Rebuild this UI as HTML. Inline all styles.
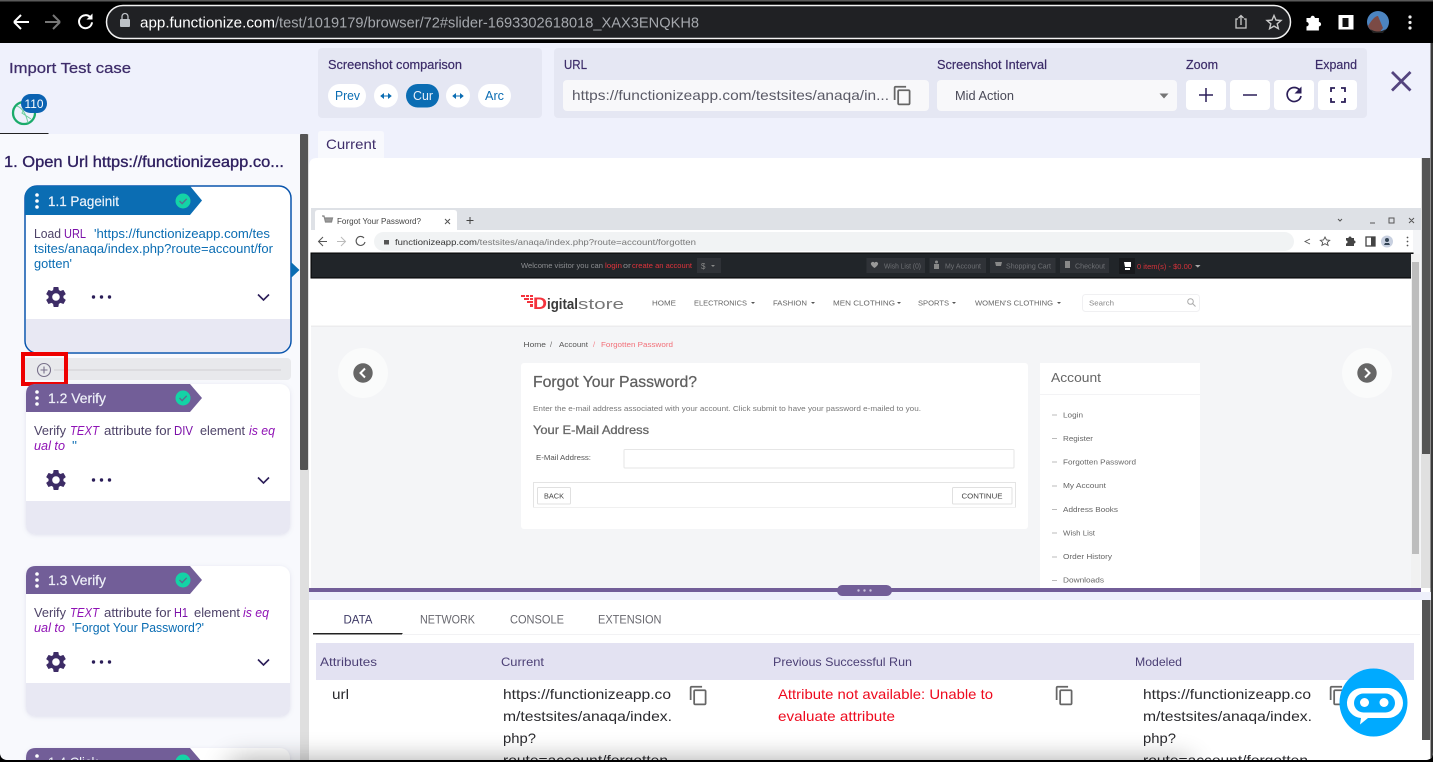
<!DOCTYPE html>
<html><head><meta charset="utf-8"><title>Functionize</title>
<style>
html,body{margin:0;padding:0;width:1433px;height:762px;overflow:hidden;background:#000}
svg{display:block;font-family:"Liberation Sans",sans-serif}
.s text{filter:blur(.25px)}
.m{stroke:currentColor;stroke-width:.2}
</style></head><body>
<svg width="1433" height="762" viewBox="0 0 1433 762" xmlns="http://www.w3.org/2000/svg">
<defs>
<path id="gear" d="M19.14 12.94c.04-.3.06-.61.06-.94 0-.32-.02-.64-.07-.94l2.03-1.58c.18-.14.23-.41.12-.61l-1.92-3.32c-.12-.22-.37-.29-.59-.22l-2.39.96c-.5-.38-1.03-.7-1.62-.94l-.36-2.54c-.04-.24-.24-.41-.48-.41h-3.84c-.24 0-.43.17-.47.41l-.36 2.54c-.59.24-1.13.57-1.62.94l-2.39-.96c-.22-.08-.47 0-.59.22L2.74 8.87c-.12.21-.08.47.12.61l2.03 1.58c-.05.3-.09.63-.09.94s.02.64.07.94l-2.03 1.58c-.18.14-.23.41-.12.61l1.92 3.32c.12.22.37.29.59.22l2.39-.96c.5.38 1.03.7 1.62.94l.36 2.54c.05.24.24.41.48.41h3.84c.24 0 .44-.17.47-.41l.36-2.54c.59-.24 1.13-.56 1.62-.94l2.39.96c.22.08.47 0 .59-.22l1.92-3.32c.12-.22.07-.47-.12-.61l-2.01-1.58zM12 15.6c-1.98 0-3.6-1.62-3.6-3.6s1.62-3.6 3.6-3.6 3.6 1.62 3.6 3.6-1.62 3.6-3.6 3.6z"/>
<path id="copy" d="M16 1H4c-1.1 0-2 .9-2 2v14h2V3h12V1zm3 4H8c-1.1 0-2 .9-2 2v14c0 1.1.9 2 2 2h11c1.1 0 2-.9 2-2V7c0-1.1-.9-2-2-2zm0 16H8V7h11v14z"/>
<g id="acts">
<use href="#gear" transform="translate(43.5,-12.5) scale(1.04)" fill="#3d2c66"/>
<circle cx="93.5" cy="0" r="1.7" fill="#2b1e58"/><circle cx="101.5" cy="0" r="1.7" fill="#2b1e58"/><circle cx="109.5" cy="0" r="1.7" fill="#2b1e58"/>
<path d="M258 -2.5l5.5 5.5 5.5-5.5" fill="none" stroke="#2b1e58" stroke-width="1.6"/>
</g>
<g id="hdrdots"><circle cx="37" cy="-6" r="1.8" fill="#fff"/><circle cx="37" cy="0" r="1.8" fill="#fff"/><circle cx="37" cy="6" r="1.8" fill="#fff"/>
<circle cx="183" cy="0" r="7.5" fill="#14d3a6"/><path d="M179.5 0l2.6 2.6 4.6-4.8" fill="none" stroke="#5b6f8e" stroke-width="1.4"/></g>
<filter id="bl" x="-20%" y="-300%" width="140%" height="700%"><feGaussianBlur stdDeviation="14"/></filter>
<filter id="sh" x="-10%" y="-10%" width="120%" height="120%"><feDropShadow dx="0" dy="1" stdDeviation="2" flood-color="#7a7aa8" flood-opacity=".2"/></filter>
<clipPath id="win"><path d="M0 43H1433V752q0 8-8 8H8q-8 0-8-8z"/></clipPath>
<clipPath id="cl"><rect x="309" y="158" width="1112" height="430"/></clipPath>
</defs>

<!-- browser chrome -->
<rect width="1433" height="762" fill="#000"/>
<rect width="1433" height="1.5" fill="#5a5a5a"/>
<path d="M14 22l7-7M14 22l7 7M14 22h15" stroke="#fff" stroke-width="2" fill="none"/>
<path d="M60 22l-7-7M60 22l-7 7M60 22H45" stroke="#777" stroke-width="2" fill="none"/>
<path d="M90.500 17.500a6.500 6.500 0 1 0 1.500 4.800" stroke="#fff" stroke-width="2" fill="none"/><path d="M92.500 13.500v6h-6z" fill="#fff"/>
<rect x="106.500" y="5.500" width="1184" height="33" rx="16.500" fill="#202124" stroke="#f2f2f2" stroke-width="1.5"/>
<rect x="120" y="19" width="10" height="8" rx="1" fill="#bdc1c6"/><path d="M122 19v-2.500a3 3 0 0 1 6 0V19" fill="none" stroke="#bdc1c6" stroke-width="1.300"/>
<text x="140" y="27.500" font-size="15" fill="#fff" textLength="135" lengthAdjust="spacingAndGlyphs">app.functionize.com</text>
<text x="275" y="27.500" font-size="15" fill="#a5a8ad" textLength="424" lengthAdjust="spacingAndGlyphs">/test/1019179/browser/72#slider-1693302618018_XAX3ENQKH8</text>
<path d="M1238 19h-2v9h10v-9h-2M1241 25v-9M1238.500 18l2.500-2.500 2.500 2.500" fill="none" stroke="#c8c8c8" stroke-width="1.300"/>
<path d="M1274 15.500l2 4.600 5 .4-3.800 3.300 1.200 4.900-4.400-2.600-4.400 2.600 1.200-4.900-3.800-3.300 5-.4z" fill="none" stroke="#c8c8c8" stroke-width="1.400"/>
<path d="M1306.500 18h4a2.200 2.200 0 0 1 4.400 0h4v4a2.200 2.200 0 0 1 0 4.400v4.100h-12.400v-4.100a2.200 2.200 0 0 0 0-4.400z" fill="#fff"/>
<rect x="1338.500" y="15" width="15" height="14.500" fill="#fff"/><rect x="1342.500" y="18" width="6" height="9" fill="#111"/>
<circle cx="1378" cy="22" r="11" fill="#4c84c0"/><path d="M1368 26q6-10 10-10l5 12-4 5q-8 0-11-7z" fill="#7b4a45"/><path d="M1370 29q8 5 16 0l-3 4h-10z" fill="#222"/>
<circle cx="1410" cy="17" r="1.600" fill="#eee"/><circle cx="1410" cy="22.500" r="1.600" fill="#eee"/><circle cx="1410" cy="28" r="1.600" fill="#eee"/>

<g clip-path="url(#win)">
<rect y="43" width="1433" height="720" fill="#eff1fc"/>

<!-- left header -->
<text x="9" y="73" font-size="15" fill="#3e2d6a" stroke="#3e2d6a" stroke-width=".25" textLength="122" lengthAdjust="spacingAndGlyphs">Import Test case</text>
<circle cx="24" cy="113" r="11" fill="none" stroke="#1bab6b" stroke-width="2.300"/>
<path d="M17 106q8 3 11 17M33 108q-9 0-11 5l9 6" fill="none" stroke="#6fcf9f" stroke-width="1"/>
<rect x="21" y="94" width="26" height="19" rx="9.500" fill="#0b63b2"/>
<text x="24.500" y="108" font-size="12" fill="#fff" textLength="19" lengthAdjust="spacingAndGlyphs">110</text>
<rect x="0" y="133" width="48.500" height="1.300" fill="#222"/>

<!-- left panel -->
<rect x="0" y="134" width="300" height="630" fill="#f8f9fd"/>
<rect x="300" y="134" width="9" height="630" fill="#dfdfdf"/>
<rect x="300" y="134" width="8" height="336" rx="1" fill="#555"/>
<text x="4" y="167" font-size="16" fill="#2f2060" stroke="#2f2060" stroke-width=".35" textLength="280" lengthAdjust="spacingAndGlyphs">1. Open Url https://functionizeapp.co...</text>

<!-- card 1 -->
<rect x="25" y="186" width="266" height="167" rx="12" fill="#fff" stroke="#0a55ad" stroke-width="1.500"/>
<path d="M26 319h264v20q0 13-12 13H38q-12 0-12-13z" fill="#e8e8f3"/>
<path d="M25 198q0-12 12-12H190l12 14.500-12 14.500H25z" fill="#0b6db3"/>
<use href="#hdrdots" y="201"/>
<text x="48" y="206" font-size="14" fill="#eef3fa" stroke="#eef3fa" stroke-width=".2" textLength="71" lengthAdjust="spacingAndGlyphs">1.1 Pageinit</text>
<text x="34" y="238" font-size="12.500" fill="#4e4368" textLength="27" lengthAdjust="spacingAndGlyphs">Load</text>
<text x="64" y="238" font-size="12.500" fill="#7b10a8" textLength="22" lengthAdjust="spacingAndGlyphs">URL</text>
<text x="94" y="238" font-size="12.500" fill="#0b6db3" textLength="176" lengthAdjust="spacingAndGlyphs">'https://functionizeapp.com/tes</text>
<text x="34" y="253" font-size="12.500" fill="#0b6db3" textLength="239" lengthAdjust="spacingAndGlyphs">tsites/anaqa/index.php?route=account/for</text>
<text x="34" y="268" font-size="12.500" fill="#0b6db3" textLength="38" lengthAdjust="spacingAndGlyphs">gotten'</text>
<use href="#acts" y="297"/>
<path d="M291 262l8.500 8-8.500 8z" fill="#0b6db3"/>

<!-- add bar -->
<rect x="22" y="358" width="269" height="22" rx="4" fill="#e8e9ec"/>
<rect x="54" y="369.500" width="227" height="1" fill="#cfcfd2"/>
<circle cx="44" cy="370" r="6.500" fill="none" stroke="#77708a" stroke-width="1.100"/>
<path d="M40.500 370h7M44 366.500v7" stroke="#77708a" stroke-width="1.100"/>
<rect x="23" y="354" width="43" height="30" fill="none" stroke="#ee0000" stroke-width="4"/>

<!-- card 2 -->
<rect x="26" y="384" width="264" height="150" rx="10" fill="#fff" filter="url(#sh)"/>
<path d="M26 501h264v23q0 10-10 10H36q-10 0-10-10z" fill="#e8e8f3"/>
<path d="M26 394q0-10 10-10H190l12 14-12 14H26z" fill="#725e98"/>
<use href="#hdrdots" y="398"/>
<text x="48" y="403" font-size="14" fill="#eef0f8" stroke="#eef0f8" stroke-width=".2" textLength="58" lengthAdjust="spacingAndGlyphs">1.2 Verify</text>
<text x="34" y="435" font-size="12.500" fill="#4e4368" textLength="32" lengthAdjust="spacingAndGlyphs">Verify</text>
<text x="70" y="435" font-size="12.500" font-style="italic" fill="#8f12b5" textLength="29" lengthAdjust="spacingAndGlyphs">TEXT</text>
<text x="104" y="435" font-size="12.500" fill="#4e4368" textLength="67" lengthAdjust="spacingAndGlyphs">attribute for</text>
<text x="174" y="435" font-size="12.500" fill="#7b10a8" textLength="19" lengthAdjust="spacingAndGlyphs">DIV</text>
<text x="200" y="435" font-size="12.500" fill="#4e4368" textLength="45" lengthAdjust="spacingAndGlyphs">element</text>
<text x="249" y="435" font-size="12.500" font-style="italic" fill="#8f12b5" textLength="26" lengthAdjust="spacingAndGlyphs">is eq</text>
<text x="34" y="450" font-size="12.500" font-style="italic" fill="#8f12b5" textLength="31" lengthAdjust="spacingAndGlyphs">ual to</text>
<text x="72" y="450" font-size="12.500" fill="#0b6db3" textLength="5" lengthAdjust="spacingAndGlyphs">''</text>
<use href="#acts" y="480"/>

<!-- card 3 -->
<rect x="26" y="566" width="264" height="150" rx="10" fill="#fff" filter="url(#sh)"/>
<path d="M26 683h264v23q0 10-10 10H36q-10 0-10-10z" fill="#e8e8f3"/>
<path d="M26 576q0-10 10-10H190l12 14-12 14H26z" fill="#725e98"/>
<use href="#hdrdots" y="580"/>
<text x="48" y="585" font-size="14" fill="#eef0f8" stroke="#eef0f8" stroke-width=".2" textLength="58" lengthAdjust="spacingAndGlyphs">1.3 Verify</text>
<text x="34" y="617" font-size="12.500" fill="#4e4368" textLength="32" lengthAdjust="spacingAndGlyphs">Verify</text>
<text x="70" y="617" font-size="12.500" font-style="italic" fill="#8f12b5" textLength="29" lengthAdjust="spacingAndGlyphs">TEXT</text>
<text x="104" y="617" font-size="12.500" fill="#4e4368" textLength="67" lengthAdjust="spacingAndGlyphs">attribute for</text>
<text x="174" y="617" font-size="12.500" fill="#7b10a8" textLength="14" lengthAdjust="spacingAndGlyphs">H1</text>
<text x="194" y="617" font-size="12.500" fill="#4e4368" textLength="46" lengthAdjust="spacingAndGlyphs">element</text>
<text x="243" y="617" font-size="12.500" font-style="italic" fill="#8f12b5" textLength="26" lengthAdjust="spacingAndGlyphs">is eq</text>
<text x="34" y="632" font-size="12.500" font-style="italic" fill="#8f12b5" textLength="31" lengthAdjust="spacingAndGlyphs">ual to</text>
<text x="72" y="632" font-size="12.500" fill="#0b6db3" textLength="132" lengthAdjust="spacingAndGlyphs">'Forgot Your Password?'</text>
<use href="#acts" y="662"/>

<!-- card 4 -->
<rect x="26" y="748" width="264" height="30" rx="10" fill="#fff" filter="url(#sh)"/>
<path d="M26 758q0-10 10-10H190l12 14-12 14H26z" fill="#725e98"/>
<use href="#hdrdots" y="762"/>
<text x="48" y="767" font-size="14" fill="#eef0f8" textLength="50" lengthAdjust="spacingAndGlyphs">1.4 Click</text>

<!-- toolbar -->
<rect x="318" y="48" width="224" height="70" rx="4" fill="#e5e7f3"/>
<text x="328" y="69" font-size="12.500" fill="#3c2c69" stroke="#3c2c69" stroke-width=".2" textLength="134" lengthAdjust="spacingAndGlyphs">Screenshot comparison</text>
<rect x="328" y="84" width="38" height="23.500" rx="11.700" fill="#fff"/>
<text x="335" y="100" font-size="12.500" fill="#0b6db3" textLength="25" lengthAdjust="spacingAndGlyphs">Prev</text>
<rect x="374" y="84" width="24" height="23.500" rx="11.700" fill="#fff"/>
<path d="M381 96h10M381 96l2.500-2v4zM391 96l-2.500-2v4z" stroke="#0b6db3" fill="#0b6db3" stroke-width="1"/>
<rect x="406" y="84" width="33" height="23.500" rx="11.700" fill="#0b6db3"/>
<text x="413" y="100" font-size="12.500" fill="#e8f0fa" textLength="20" lengthAdjust="spacingAndGlyphs">Cur</text>
<rect x="446" y="84" width="24" height="23.500" rx="11.700" fill="#fff"/>
<path d="M453 96h10M453 96l2.500-2v4zM463 96l-2.500-2v4z" stroke="#0b6db3" fill="#0b6db3" stroke-width="1"/>
<rect x="478" y="84" width="33" height="23.500" rx="11.700" fill="#fff"/>
<text x="485" y="100" font-size="12.500" fill="#0b6db3" textLength="19" lengthAdjust="spacingAndGlyphs">Arc</text>

<rect x="554" y="48" width="813" height="70" rx="4" fill="#e5e7f3"/>
<text x="564" y="69" font-size="12.500" fill="#3c2c69" stroke="#3c2c69" stroke-width=".2" textLength="23" lengthAdjust="spacingAndGlyphs">URL</text>
<rect x="563" y="80" width="366" height="31" rx="4" fill="#f8f8fa"/>
<text x="572" y="100" font-size="14" fill="#5a5a66" textLength="317" lengthAdjust="spacingAndGlyphs">https://functionizeapp.com/testsites/anaqa/in...</text>
<use href="#copy" transform="translate(892,85) scale(.88)" fill="#666"/>
<text x="937" y="69" font-size="12.500" fill="#3c2c69" stroke="#3c2c69" stroke-width=".2" textLength="110" lengthAdjust="spacingAndGlyphs">Screenshot Interval</text>
<rect x="937" y="80" width="240" height="31" rx="4" fill="#f8f8fa"/>
<text x="955" y="100" font-size="12.500" fill="#4a4a58" textLength="59" lengthAdjust="spacingAndGlyphs">Mid Action</text>
<path d="M1159.500 93.500h9l-4.500 5z" fill="#757575"/>
<text x="1186" y="69" font-size="12.500" fill="#3c2c69" stroke="#3c2c69" stroke-width=".2" textLength="32" lengthAdjust="spacingAndGlyphs">Zoom</text>
<text x="1315" y="69" font-size="12.500" fill="#3c2c69" stroke="#3c2c69" stroke-width=".2" textLength="42" lengthAdjust="spacingAndGlyphs">Expand</text>
<rect x="1186" y="80" width="40" height="30" rx="4" fill="#fff"/>
<rect x="1230" y="80" width="40" height="30" rx="4" fill="#fff"/>
<rect x="1274" y="80" width="40" height="30" rx="4" fill="#fff"/>
<rect x="1318" y="80" width="39" height="30" rx="4" fill="#fff"/>
<path d="M1206 88v14M1199 95h14M1243 95h14" stroke="#2b1e58" stroke-width="1.500" fill="none"/>
<path d="M1299.500 90a7 7 0 1 0 1.500 6" stroke="#2b1e58" stroke-width="1.700" fill="none"/><path d="M1301.500 86.500v7h-7z" fill="#2b1e58"/>
<path d="M1331 92v-4h4M1341 88h4v4M1345 98v4h-4M1335 102h-4v-4" stroke="#2b1e58" stroke-width="1.800" fill="none"/>
<path d="M1392 72l18.500 18.500M1410.500 72L1392 90.500" stroke="#54447f" stroke-width="2.800" fill="none"/>

<!-- main tab + content -->
<path d="M318 158v-24q0-3 3-3h60q3 0 3 3v24z" fill="#f8f9fd"/>
<text x="326" y="149" font-size="14" fill="#3e2d6a" textLength="50" lengthAdjust="spacingAndGlyphs">Current</text>
<path d="M309 166q0-8 8-8H1433V762H309z" fill="#fff"/>

<!-- inner screenshot -->
<g clip-path="url(#cl)" class="s">
<rect x="311" y="208" width="1110" height="380" fill="#f4f5f7"/>
<rect x="311" y="208" width="1110" height="22" fill="#dee1e6"/>
<path d="M315 230v-17q0-3 3-3h136q3 0 3 3v17z" fill="#fff"/>
<path d="M322 216h2l1.500 6h6l1-4h-7.500" fill="#999" stroke="#888" stroke-width="1.200"/>
<text x="337" y="224" font-size="8.500" fill="#444" textLength="84" lengthAdjust="spacingAndGlyphs">Forgot Your Password?</text>
<path d="M445 219l5 5M450 219l-5 5" stroke="#555" stroke-width="1"/>
<path d="M470 217v7M466.500 220.500h7" stroke="#444" stroke-width="1"/>
<path d="M1338 219l2 2 2-2M1370 223h5M1389 218h5v5h-5zM1409 218l5 5M1414 218l-5 5" stroke="#555" stroke-width="1" fill="none"/>
<rect x="311" y="230" width="1102" height="23" fill="#fff"/>
<path d="M323 237l-4.500 4.500 4.500 4.500M319 241.500h8" stroke="#555" stroke-width="1" fill="none"/>
<path d="M341 237l4.500 4.500-4.500 4.500M345 241.500h-8" stroke="#bbb" stroke-width="1" fill="none"/>
<path d="M364 238a4.500 4.500 0 1 0 1 4" stroke="#555" stroke-width="1.100" fill="none"/>
<rect x="374" y="232" width="920" height="19" rx="9.500" fill="#f1f3f4"/>
<rect x="384" y="240" width="5" height="4.500" fill="#555"/>
<text x="395" y="245" font-size="8.500" fill="#333" textLength="82" lengthAdjust="spacingAndGlyphs">functionizeapp.com</text>
<text x="477" y="245" font-size="8.500" fill="#777" textLength="219" lengthAdjust="spacingAndGlyphs">/testsites/anaqa/index.php?route=account/forgotten</text>
<path d="M1310 239l-5 2.500 5 2.500M1325 237l1.500 3 3.200.3-2.400 2.100.8 3-3.100-1.700-3.100 1.700.8-3-2.400-2.100 3.200-.3z" stroke="#555" fill="none" stroke-width=".9"/>
<path d="M1346 238h2.500a1.500 1.500 0 0 1 3 0h2.500v2.500a1.500 1.500 0 0 1 0 3v2.500h-8v-2.500a1.500 1.500 0 0 0 0-3z" fill="#444"/>
<rect x="1366" y="237" width="9" height="9" fill="none" stroke="#444" stroke-width="1.300"/><rect x="1371" y="237" width="4" height="9" fill="#444"/>
<circle cx="1387" cy="241.500" r="6" fill="#c8d0e0"/><circle cx="1387" cy="240" r="2" fill="#345"/><path d="M1384 245h6l-1-2h-4z" fill="#345"/>
<circle cx="1407.500" cy="237.500" r=".9" fill="#555"/><circle cx="1407.500" cy="241.500" r=".9" fill="#555"/><circle cx="1407.500" cy="245.500" r=".9" fill="#555"/>

<rect x="311" y="253" width="1102" height="25" fill="#212529" stroke="#000" stroke-width="1"/>
<text x="521" y="268" font-size="7.500" fill="#8b8d90" textLength="82" lengthAdjust="spacingAndGlyphs">Welcome visitor you can</text>
<text x="605" y="268" font-size="7.500" fill="#e0343c" textLength="17" lengthAdjust="spacingAndGlyphs">login</text>
<text x="623" y="268" font-size="7.500" fill="#8b8d90" textLength="8" lengthAdjust="spacingAndGlyphs">or</text>
<text x="632" y="268" font-size="7.500" fill="#e0343c" textLength="60" lengthAdjust="spacingAndGlyphs">create an account</text>
<rect x="697" y="258" width="24" height="15" fill="#2f3237"/>
<text x="701" y="269" font-size="8" fill="#888">$</text><path d="M711 265h4l-2 2z" fill="#888"/>
<rect x="866.500" y="258" width="58.500" height="15" fill="#2f3237"/>
<rect x="929.500" y="258" width="56.500" height="15" fill="#2f3237"/>
<rect x="990" y="258" width="65.500" height="15" fill="#2f3237"/>
<rect x="1060" y="258" width="49" height="15" fill="#2f3237"/>
<path d="M871 263c1.500-2 3.500-1 3.500 0 0-1 2-2 3.500 0 1 2-3.500 5-3.500 5s-4.500-3-3.500-5z" fill="#999"/>
<text x="884" y="268.500" font-size="7" fill="#6f7175" textLength="37" lengthAdjust="spacingAndGlyphs">Wish List (0)</text>
<rect x="934" y="264" width="5" height="5" fill="#888"/><circle cx="936.500" cy="262" r="1.500" fill="#888"/>
<text x="945" y="268.500" font-size="7" fill="#6f7175" textLength="36" lengthAdjust="spacingAndGlyphs">My Account</text>
<path d="M995 262h7l-1 4h-5z" fill="#888"/>
<text x="1006" y="268.500" font-size="7" fill="#6f7175" textLength="45" lengthAdjust="spacingAndGlyphs">Shopping Cart</text>
<rect x="1065" y="261" width="5" height="7" fill="#888"/>
<text x="1075" y="268.500" font-size="7" fill="#6f7175" textLength="30" lengthAdjust="spacingAndGlyphs">Checkout</text>
<rect x="1119" y="258" width="16" height="16" fill="#181a1d"/>
<path d="M1124 262h7v5h-6zM1125 268h5v2h-5z" fill="#fff"/>
<text x="1137" y="269" font-size="7.500" fill="#d6323a" textLength="55" lengthAdjust="spacingAndGlyphs">0 item(s) - $0.00</text>
<path d="M1195 265h5.500l-2.700 2.600z" fill="#aaa"/>

<rect x="311" y="279" width="1102" height="47" fill="#fff"/>
<rect x="311" y="325.500" width="1102" height="1.500" fill="#ececee"/>
<!-- logo -->
<g fill="#f4333d"><rect x="521" y="295" width="4" height="2"/><rect x="526" y="295" width="3" height="2"/><rect x="524" y="298" width="5" height="2"/><rect x="530" y="295" width="3" height="2"/><rect x="527" y="301" width="6" height="2"/><rect x="530" y="298" width="3" height="2"/><rect x="530" y="304" width="3" height="3"/></g>
<text x="533" y="309" font-size="17" font-weight="bold" fill="#f4333d" textLength="14" lengthAdjust="spacingAndGlyphs">D</text>
<text x="547" y="309" font-size="15" font-weight="bold" fill="#3a3a3a" textLength="31" lengthAdjust="spacingAndGlyphs">igital</text>
<text x="578" y="309" font-size="15" fill="#777" textLength="46" lengthAdjust="spacingAndGlyphs">store</text>
<g font-size="7.500" fill="#666">
<text x="652" y="305.500" textLength="24" lengthAdjust="spacingAndGlyphs">HOME</text>
<text x="694" y="305.500" textLength="53" lengthAdjust="spacingAndGlyphs">ELECTRONICS</text>
<text x="773" y="305.500" textLength="34" lengthAdjust="spacingAndGlyphs">FASHION</text>
<text x="833" y="305.500" textLength="62" lengthAdjust="spacingAndGlyphs">MEN CLOTHING</text>
<text x="918" y="305.500" textLength="31" lengthAdjust="spacingAndGlyphs">SPORTS</text>
<text x="975" y="305.500" textLength="78" lengthAdjust="spacingAndGlyphs">WOMEN'S CLOTHING</text>
</g>
<path d="M751 302h4l-2 2zM811 302h4l-2 2zM897 302h4l-2 2zM952 302h4l-2 2zM1057 302h4l-2 2z" fill="#555"/>
<rect x="1082.500" y="294.500" width="117" height="17" rx="3" fill="#fff" stroke="#f0f0f2"/>
<text x="1089" y="305.500" font-size="7.500" fill="#888" textLength="25" lengthAdjust="spacingAndGlyphs">Search</text>
<circle cx="1190.500" cy="301.500" r="2.800" fill="none" stroke="#aaa"/><path d="M1192.500 303.500l3 3" stroke="#aaa"/>

<text x="523.500" y="347" font-size="7.500" fill="#555" textLength="22.500" lengthAdjust="spacingAndGlyphs">Home</text>
<text x="550" y="347" font-size="7.500" fill="#666">/</text>
<text x="559" y="347" font-size="7.500" fill="#555" textLength="29" lengthAdjust="spacingAndGlyphs">Account</text>
<text x="593" y="347" font-size="7.500" fill="#f4808a">/</text>
<text x="601" y="347" font-size="7.500" fill="#f27079" textLength="72" lengthAdjust="spacingAndGlyphs">Forgotten Password</text>

<circle cx="363" cy="373" r="25" fill="#fafbfb"/><circle cx="363" cy="373" r="9.700" fill="#666"/>
<path d="M365 368.500l-4.500 4.500 4.500 4.500" fill="none" stroke="#fff" stroke-width="2"/>
<circle cx="1367" cy="373" r="25" fill="#fafbfb"/><circle cx="1367" cy="373" r="9.700" fill="#666"/>
<path d="M1365 368.500l4.500 4.500-4.500 4.500" fill="none" stroke="#fff" stroke-width="2"/>

<rect x="521" y="363" width="507" height="166" rx="3" fill="#fff"/>
<text x="533" y="387" font-size="16" fill="#5f5f5f" stroke="#5f5f5f" stroke-width=".25" textLength="164" lengthAdjust="spacingAndGlyphs">Forgot Your Password?</text>
<text x="533" y="411" font-size="7.500" fill="#777" textLength="388" lengthAdjust="spacingAndGlyphs">Enter the e-mail address associated with your account. Click submit to have your password e-mailed to you.</text>
<text x="533" y="434" font-size="12" fill="#666" stroke="#666" stroke-width=".3" textLength="116" lengthAdjust="spacingAndGlyphs">Your E-Mail Address</text>
<text x="536" y="460" font-size="7.500" fill="#555" textLength="55" lengthAdjust="spacingAndGlyphs">E-Mail Address:</text>
<rect x="624" y="449.500" width="390" height="18.500" rx="1" fill="#fff" stroke="#e6e6e6"/>
<path d="M533.500 508v-25.500H1015.500V508" fill="none" stroke="#e4e4e4"/><path d="M533 507.500h483" stroke="#f0f0f0"/>
<rect x="537.500" y="487.500" width="33" height="16.500" rx="1" fill="#fff" stroke="#e0e0e0"/>
<text x="544" y="498.500" font-size="7.500" fill="#444" textLength="20" lengthAdjust="spacingAndGlyphs">BACK</text>
<rect x="952.500" y="487.500" width="59.500" height="16.500" rx="1" fill="#fff" stroke="#e0e0e0"/>
<text x="961.500" y="498.500" font-size="7.500" fill="#444" textLength="41" lengthAdjust="spacingAndGlyphs">CONTINUE</text>

<rect x="1040" y="363" width="160" height="240" fill="#fff"/>
<rect x="1040" y="394" width="160" height="1" fill="#f3f3f5"/>
<text x="1051" y="382" font-size="12.500" fill="#666" textLength="50" lengthAdjust="spacingAndGlyphs">Account</text>
<g font-size="7.500" fill="#666">
<text x="1063" y="417.500" textLength="20" lengthAdjust="spacingAndGlyphs">Login</text>
<text x="1063" y="441" textLength="30" lengthAdjust="spacingAndGlyphs">Register</text>
<text x="1063" y="464.500" textLength="73" lengthAdjust="spacingAndGlyphs">Forgotten Password</text>
<text x="1063" y="488" textLength="43" lengthAdjust="spacingAndGlyphs">My Account</text>
<text x="1063" y="512" textLength="55" lengthAdjust="spacingAndGlyphs">Address Books</text>
<text x="1063" y="535.500" textLength="32" lengthAdjust="spacingAndGlyphs">Wish List</text>
<text x="1063" y="559" textLength="49" lengthAdjust="spacingAndGlyphs">Order History</text>
<text x="1063" y="582.500" textLength="41" lengthAdjust="spacingAndGlyphs">Downloads</text>
</g>
<path d="M1052 415h5M1052 438.500h5M1052 462h5M1052 486h5M1052 509.500h5M1052 533h5M1052 557h5M1052 580.500h5" stroke="#bbb"/>

<rect x="1411" y="254" width="9" height="334" fill="#f1f1f1"/>
<rect x="1412" y="262" width="7" height="292" fill="#bdbdbd"/>
</g>

<!-- scrollbars -->
<rect x="1421" y="158" width="10" height="430" fill="#e0e0e0"/>
<rect x="1422" y="158" width="8" height="296" fill="#555"/>
<rect x="1430.500" y="43" width="2.500" height="720" fill="#3a3a3a"/>

<!-- divider -->
<rect x="309" y="592" width="1122" height="8" fill="#eef0fb"/>
<rect x="309" y="588" width="1112" height="4" fill="#725e98"/>
<rect x="837" y="585" width="55" height="11" rx="5.500" fill="#725e98"/>
<circle cx="858.500" cy="590.500" r="1.200" fill="#c9c2dc"/><circle cx="864.500" cy="590.500" r="1.200" fill="#c9c2dc"/><circle cx="870.500" cy="590.500" r="1.200" fill="#c9c2dc"/>
<rect x="1422" y="600" width="8" height="140" fill="#555"/>

<!-- bottom tabs -->
<text x="343.500" y="623.500" font-size="12" fill="#3e3a66" textLength="29" lengthAdjust="spacingAndGlyphs">DATA</text>
<text x="420" y="623.500" font-size="12" fill="#68686f" textLength="55" lengthAdjust="spacingAndGlyphs">NETWORK</text>
<text x="510" y="623.500" font-size="12" fill="#68686f" textLength="54" lengthAdjust="spacingAndGlyphs">CONSOLE</text>
<text x="598" y="623.500" font-size="12" fill="#68686f" textLength="63.500" lengthAdjust="spacingAndGlyphs">EXTENSION</text>
<rect x="313" y="633" width="89.500" height="1.500" fill="#222"/>
<rect x="402" y="634" width="1018" height="1" fill="#f2f2f4"/>

<!-- table -->
<rect x="316" y="643" width="1098" height="37" fill="#e3e2f2"/>
<g font-size="12" fill="#4b3f75">
<text x="320" y="666" textLength="57" lengthAdjust="spacingAndGlyphs">Attributes</text>
<text x="501" y="666" textLength="43" lengthAdjust="spacingAndGlyphs">Current</text>
<text x="773" y="666" textLength="139" lengthAdjust="spacingAndGlyphs">Previous Successful Run</text>
<text x="1135" y="666" textLength="47" lengthAdjust="spacingAndGlyphs">Modeled</text>
</g>
<g font-size="14" fill="#2a2a2e">
<text x="332" y="699" textLength="17" lengthAdjust="spacingAndGlyphs">url</text>
<text x="503" y="699" textLength="168" lengthAdjust="spacingAndGlyphs">https://functionizeapp.co</text>
<text x="503" y="721" textLength="169" lengthAdjust="spacingAndGlyphs">m/testsites/anaqa/index.</text>
<text x="503" y="743" textLength="33" lengthAdjust="spacingAndGlyphs">php?</text>
<text x="503" y="765" textLength="165" lengthAdjust="spacingAndGlyphs">route=account/forgotten</text>
<text x="1143" y="699" textLength="168" lengthAdjust="spacingAndGlyphs">https://functionizeapp.co</text>
<text x="1143" y="721" textLength="169" lengthAdjust="spacingAndGlyphs">m/testsites/anaqa/index.</text>
<text x="1143" y="743" textLength="33" lengthAdjust="spacingAndGlyphs">php?</text>
<text x="1143" y="765" textLength="165" lengthAdjust="spacingAndGlyphs">route=account/forgotten</text>
</g>
<text x="778" y="699" font-size="14" fill="#ee0a1e" textLength="215" lengthAdjust="spacingAndGlyphs">Attribute not available: Unable to</text>
<text x="778" y="721" font-size="14" fill="#ee0a1e" textLength="117" lengthAdjust="spacingAndGlyphs">evaluate attribute</text>
<use href="#copy" transform="translate(688,685) scale(.88)" fill="#666"/>
<use href="#copy" transform="translate(1054,685) scale(.88)" fill="#666"/>
<use href="#copy" transform="translate(1328,685) scale(.88)" fill="#666"/>

<!-- bottom shade -->
<rect x="230" y="762" width="960" height="26" fill="#000" opacity=".4" filter="url(#bl)"/>

<!-- chat bot -->
<circle cx="1373.500" cy="702.500" r="34" fill="#00aaff"/>
<path d="M1363 688h25a15 15 0 0 1 0 30h-20l-8 6.500 1-6.500a15 15 0 0 1 2-30z" fill="#fff"/>
<rect x="1354" y="693.500" width="41" height="19" rx="9.500" fill="#00aaff"/>
<circle cx="1364.500" cy="702.500" r="4.500" fill="#fff"/><circle cx="1384" cy="702.500" r="4.500" fill="#fff"/>
</g>
</svg>
</body></html>
